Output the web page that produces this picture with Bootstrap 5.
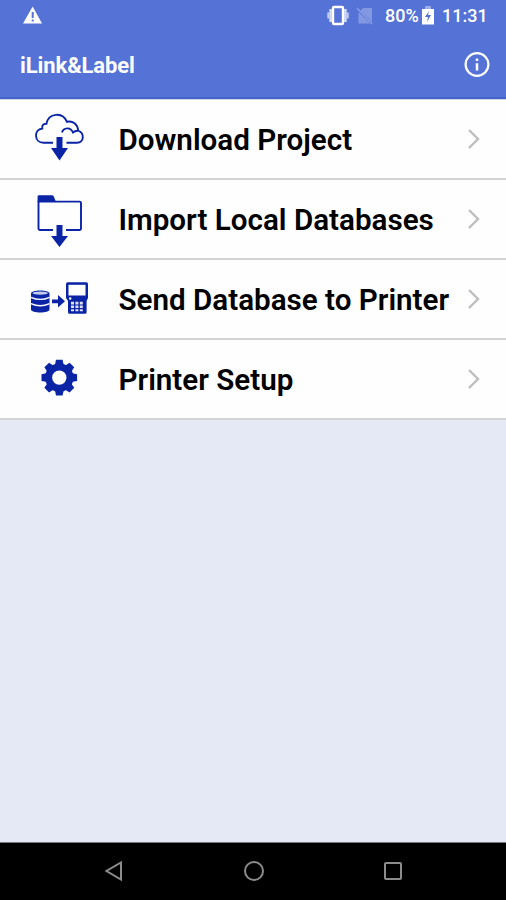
<!DOCTYPE html>
<html lang="en">
<head>
<meta charset="utf-8">
<meta name="viewport" content="width=device-width, initial-scale=1">
<title>iLink&amp;Label</title>
<link href="https://cdn.jsdelivr.net/npm/bootstrap@5.3.0/dist/css/bootstrap.min.css" rel="stylesheet">
<style>
  body { font-family: Roboto, "Liberation Sans", sans-serif; background: #e5e8f5; color: #000; }
  .screen { height: 900px; width: 506px; }
  .app-top { background: #5572d6; height: 100px; border-bottom: 1px solid #d5d5dc; box-shadow: inset 0 -2px 0 #4263cb; color: #fff; }
  .status { height: 32px; padding: 0 20px 0 22px; font-size: 18px; font-weight: 500; line-height: 32px; }
  .pct { width: 33px; margin-left: 10px; }
  .clock { width: 44px; margin-left: 8px; }
  .title-row { height: 67px; padding: 0 14px 0 20px; }
  .app-title { font-size: 22px; font-weight: 700; line-height: 67px; letter-spacing: -.1px; }
  .menu-item { height: 80px; background: #fefefe; border-bottom: 2px solid #d2d2d3 !important; padding: 0 25px 0 0; border-radius: 0 !important; }
  .menu-label { font-size: 29.6px; font-weight: 600; line-height: 76px; padding-top: 2px; margin-left: .5px; white-space: nowrap; }
  .menu-icon { width: 118px; height: 78px; color: #0a24a5; flex: none; }
  .nav-keys { height: 58px; background: #000; border-top: 1px solid #777; padding: 0 103px 2px 104px; }
</style>
</head>
<body>
<div class="screen d-flex flex-column overflow-hidden">
  <header class="app-top flex-shrink-0">
    <div class="status d-flex align-items-center">
      <svg width="22" height="32" viewBox="0 0 22 32"><path d="M10.700 6.500 20 23.500H1Z" fill="#fff"/><path d="M10.700 12v6M10.700 19.500v2" stroke="#5572d6" stroke-width="2"/></svg>
      <svg class="ms-auto" width="22" height="32" viewBox="0 0 22 32" fill="none" stroke="#fff"><rect x="6" y="7" width="10" height="17" rx="1" stroke-width="2.400"/><path d="M3.600 9v13M18.400 9v13" stroke-width="2.600" stroke="#d5dcf6"/><path d="M1.300 12.500v6M20.700 12.500v6" stroke-width="2" stroke="#c3cdf2"/></svg>
      <svg width="26" height="32" viewBox="0 0 26 32"><path d="M14 8h9v14L11.500 10.500ZM9.500 12 21 23.500H9.500Z" fill="#8298e2"/><path d="m8 8 15 16" stroke="#8fa2e5" stroke-width="1.300"/></svg>
      <span class="pct">80%</span>
      <svg class="ms-1" width="12" height="32" viewBox="0 0 12 32"><path d="M3.500 6.500h5V9H12v15.500H0V9h3.500Z" fill="#fff"/><path d="M3.500 6.500h5V9h-5Z" fill="#9dafea"/><path d="M7 11 3 17h3l-1 5 4-7H6Z" fill="#5572d6"/></svg>
      <span class="clock">11:31</span>
    </div>
    <div class="title-row d-flex align-items-center justify-content-between">
      <h1 class="app-title m-0">iLink&amp;Label</h1>
      <svg width="28" height="28" viewBox="0 0 28 28" fill="none" stroke="#fff" aria-label="Info"><circle cx="13" cy="12.500" r="11.400" stroke-width="2.200"/><path d="M13 11.200v7.300M13 6.500v2.600" stroke-width="2.500"/></svg>
    </div>
  </header>

  <main class="list-group list-group-flush">
    <a class="menu-item list-group-item-action text-reset text-decoration-none d-flex align-items-center" href="#">
      <svg class="menu-icon" viewBox="0 0 118 78"><g fill="none" stroke="currentColor" stroke-width="1.900"><path d="M53 42.700H43.500C34 42.700 33.500 29.500 42.300 28.500 41.500 25.500 43.500 23.500 46.500 23.700 48.500 13 62.500 11.500 67 21.800 73 20.500 77.500 24 78.200 30.500 85 33.500 84 42.700 77 42.700H66.500"/><path d="M62 32.500C63.500 27.500 70.500 26.500 73 32.500 74.500 31.200 76.500 30.500 78.200 30.800"/></g><path d="M56.500 37h6v11h5.500L59.500 60.500 51 48h5.500Z" fill="currentColor"/></svg>
      <span class="menu-label">Download Project</span>
      <svg class="ms-auto" width="14" height="24" viewBox="0 0 14 24"><path d="m2 3 9 9-9 9" fill="none" stroke="#bdbdbd" stroke-width="2.400"/></svg>
    </a>
    <a class="menu-item list-group-item-action text-reset text-decoration-none d-flex align-items-center" href="#">
      <svg class="menu-icon" viewBox="0 0 118 78"><path d="M53 50H40a1.500 1.500 0 0 1-1.500-1.500V21.600H79.500A1.500 1.500 0 0 1 81 23.100V48.500A1.500 1.500 0 0 1 79.500 50H66" fill="none" stroke="currentColor" stroke-width="1.900"/><path d="M37.600 16.500q0-1.300 1.300-1.300H52q1.300 0 1.800 1.300l2.200 5.500H37.600ZM56.500 45h6v11h5.500L59.500 67 51 56h5.500Z" fill="currentColor"/></svg>
      <span class="menu-label">Import Local Databases</span>
      <svg class="ms-auto" width="14" height="24" viewBox="0 0 14 24"><path d="m2 3 9 9-9 9" fill="none" stroke="#bdbdbd" stroke-width="2.400"/></svg>
    </a>
    <a class="menu-item list-group-item-action text-reset text-decoration-none d-flex align-items-center" href="#">
      <svg class="menu-icon" viewBox="0 0 118 78"><path d="M31 33.500C31 29.500 49.500 29.500 49.500 33.500V49.500C49.500 53.500 31 53.500 31 49.500Z" fill="currentColor"/><ellipse cx="40.250" cy="33.200" rx="7.600" ry="1.600" fill="#c4cbec"/><path d="M31 37.300Q40.250 41.500 49.500 37.300M31 43.600Q40.250 47.800 49.500 43.600" fill="none" stroke="#fff" stroke-width="1.400"/><path d="M52 39.500h6V35l7 6.300-7 6.300V43.200h-6Z" fill="currentColor"/><path d="M66 24q0-1.700 1.700-1.700H86.300Q88 22.300 88 24V38l-1.400 3v11.200q0 1.500-1.500 1.500H69.500q-1.500 0-1.500-1.500V41L66 38Z" fill="currentColor"/><path d="M68.500 24.800h17V35.500H68.500Z" fill="#fff"/><circle cx="70.200" cy="38.500" r="1.200" fill="#fff"/><path d="M71 41.800h3v2.600h-3Zm4.400 0h3v2.600h-3Zm4.400 0h3v2.600h-3ZM71 45.600h3v2.400h-3Zm4.400 0h3v2.400h-3Zm4.400 0h3v2.400h-3ZM71 49.200h3v2h-3Zm4.400 0h3v2h-3Zm4.400 0h3v2h-3Z" fill="#dfe3f5"/></svg>
      <span class="menu-label">Send Database to Printer</span>
      <svg class="ms-auto" width="14" height="24" viewBox="0 0 14 24"><path d="m2 3 9 9-9 9" fill="none" stroke="#bdbdbd" stroke-width="2.400"/></svg>
    </a>
    <a class="menu-item list-group-item-action text-reset text-decoration-none d-flex align-items-center" href="#">
      <svg class="menu-icon" viewBox="0 0 118 78"><g transform="translate(59.300 37.600)"><circle r="10.700" fill="none" stroke="currentColor" stroke-width="7"/><g fill="currentColor"><path id="tooth" d="M-4.500-12-3.300-17.800h6.600L4.500-12Z"/><use href="#tooth" transform="rotate(45)"/><use href="#tooth" transform="rotate(90)"/><use href="#tooth" transform="rotate(135)"/><use href="#tooth" transform="rotate(180)"/><use href="#tooth" transform="rotate(225)"/><use href="#tooth" transform="rotate(270)"/><use href="#tooth" transform="rotate(315)"/></g></g></svg>
      <span class="menu-label">Printer Setup</span>
      <svg class="ms-auto" width="14" height="24" viewBox="0 0 14 24"><path d="m2 3 9 9-9 9" fill="none" stroke="#bdbdbd" stroke-width="2.400"/></svg>
    </a>
  </main>

  <nav class="nav-keys mt-auto d-flex align-items-center justify-content-between flex-shrink-0">
    <svg width="20" height="22" viewBox="0 0 20 22"><path d="M17 2.500v17L2.500 11Z" fill="none" stroke="#8c8c8c" stroke-width="2"/></svg>
    <svg width="22" height="22" viewBox="0 0 22 22"><circle cx="11" cy="11" r="9" fill="none" stroke="#8c8c8c" stroke-width="2"/></svg>
    <svg width="20" height="22" viewBox="0 0 20 22"><rect x="2" y="3" width="16" height="16" rx="1" fill="none" stroke="#8c8c8c" stroke-width="2"/></svg>
  </nav>
</div>
<script src="https://cdn.jsdelivr.net/npm/bootstrap@5.3.0/dist/js/bootstrap.bundle.min.js"></script>
</body>
</html>
